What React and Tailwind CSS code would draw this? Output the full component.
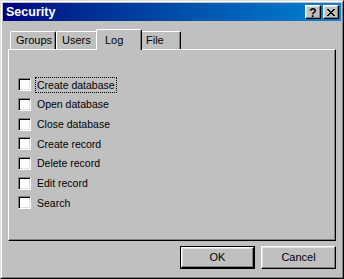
import React from 'react';

const items = [
  'Create database',
  'Open database',
  'Close database',
  'Create record',
  'Delete record',
  'Edit record',
  'Search',
];

const tabs = ['Groups', 'Users', 'Log', 'File'];

const raised =
  'border border-t-white border-l-white border-r-black border-b-black shadow-[inset_-1px_-1px_#808080,inset_1px_1px_#dfdfdf]';

const CaptionButton = ({ children }) => (
  <div className={`w-[16px] h-[14px] bg-[#c0c0c0] flex items-center justify-center ${raised}`}>
    {children}
  </div>
);

const Checkbox = () => (
  <div className="w-[13px] h-[13px] bg-white border border-t-[#808080] border-l-[#808080] border-r-white border-b-white shadow-[inset_1px_1px_#000,inset_-1px_-1px_#dfdfdf]" />
);

export default function App() {
  return (
    <div
      className="w-[344px] h-[279px] bg-[#c0c0c0] border border-t-[#dfdfdf] border-l-[#dfdfdf] border-r-black border-b-black"
      style={{ fontFamily: '"Liberation Sans", Arial, sans-serif' }}
    >
      <div className="h-full border border-t-white border-l-white border-r-[#808080] border-b-[#808080] p-px flex flex-col">
        {/* Title bar */}
        <div className="h-[18px] bg-gradient-to-r from-[#000080] to-[#1084d0] flex items-center justify-between pl-[3px] pr-[2px]">
          <span className="text-white font-bold text-[12.5px] leading-none">Security</span>
          <div className="flex gap-[2px]">
            <CaptionButton>
              <span className="text-black font-bold text-[12px] leading-none mt-px">?</span>
            </CaptionButton>
            <CaptionButton>
              <svg width="8" height="7" viewBox="0 0 8 7" shapeRendering="crispEdges">
                <path d="M0 0h2v1H0zM6 0h2v1H6zM1 1h2v1H1zM5 1h2v1H5zM2 2h4v1H2zM3 3h2v1H3zM2 4h4v1H2zM1 5h2v1H1zM5 5h2v1H5zM0 6h2v1H0zM6 6h2v1H6z" fill="#000" />
              </svg>
            </CaptionButton>
          </div>
        </div>

        {/* Body */}
        <div className="flex-1 px-[5px] pt-[8px] text-[10.5px] text-black">
          <div className="h-[20px] flex items-end pl-[2px]">
            {tabs.map((t) =>
              t === 'Log' ? (
                <div
                  key={t}
                  className="relative z-10 w-[46px] h-[21px] -mb-px -mx-[2px] pl-[8px] bg-[#c0c0c0] border-t border-l border-t-white border-l-white border-r border-r-black shadow-[inset_-1px_0_#808080] rounded-tl-[2px] rounded-tr-[2px] flex items-start pt-[2px]"
                >
                  <span className="text-[11px]">{t}</span>
                </div>
              ) : (
                <div
                  key={t}
                  className={`h-[18px] ${t === 'Groups' ? 'w-[46px]' : t === 'Users' ? 'w-[42px]' : 'w-[41px]'} bg-[#c0c0c0] border-t border-l border-t-white border-l-white border-r border-r-black shadow-[inset_-1px_0_#808080] rounded-tl-[2px] rounded-tr-[2px] flex items-center pl-[5px]`}
                >
                  <span className="text-[11px]">{t}</span>
                </div>
              )
            )}
          </div>

          {/* Panel */}
          <div className="h-[192px] border border-t-white border-l-white border-r-black border-b-black shadow-[inset_-1px_-1px_#808080] pt-[25px] pl-[9px]">
            <div className="flex flex-col">
              {items.map((label, i) => (
                <div key={label} className="h-[19.67px] flex items-center">
                  <Checkbox />
                  <span
                    className={`ml-[4px] px-[1px] leading-[14px] border ${
                      i === 0 ? 'border-dotted border-black' : 'border-transparent'
                    }`}
                  >
                    {label}
                  </span>
                </div>
              ))}
            </div>
          </div>

          {/* Buttons */}
          <div className="mt-[5px] flex justify-end gap-[6px]">
            <div className="w-[75px] h-[23px] border border-black">
              <div className={`h-full flex items-center justify-center text-[11px] ${raised}`}>OK</div>
            </div>
            <div className={`w-[75px] h-[23px] flex items-center justify-center text-[11px] ${raised}`}>Cancel</div>
          </div>
        </div>
      </div>
    </div>
  );
}
